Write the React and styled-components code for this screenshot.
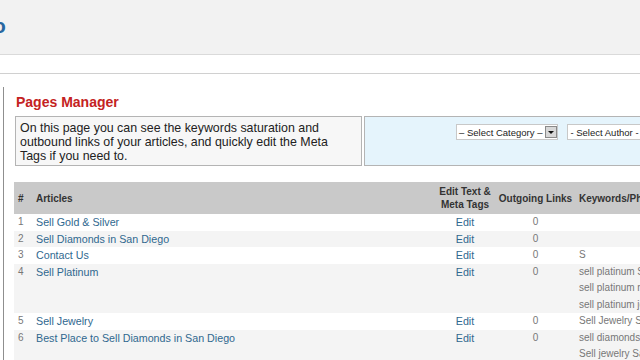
import React from 'react';
import styled, { createGlobalStyle, css } from 'styled-components'

const Global = createGlobalStyle`
  html, body {
    margin: 0;
    padding: 0;
    background: #fff;
    overflow: hidden;
    font-family: "Liberation Sans", Arial, sans-serif;
  }
`

const Page = styled.div`
  width: 640px;
  height: 360px;
  overflow: hidden;
`

const Header = styled.div`
  height: 54px;
  background: #f2f2f2;
  border-bottom: 1px solid #dadada;
  display: flex;
  align-items: flex-start;
`

const Logo = styled.span`
  margin-left: -7px;
  margin-top: 14px;
  font-size: 21px;
  font-weight: bold;
  color: #2867a0;
  line-height: 24px;
`

const SubBar = styled.div`
  height: 18px;
  border-bottom: 1px solid #d0d0d0;
`

const Panel = styled.div`
  margin: 13px 0 0 3px;
  border-left: 1px solid #8f8f8f;
  padding: 7px 0 0 10px;
  height: 300px;
`

const Title = styled.h1`
  margin: 0 0 6px 2px;
  font-size: 14px;
  line-height: 16px;
  font-weight: bold;
  color: #c42222;
`

const InfoRow = styled.div`
  display: flex;
  gap: 2px;
  margin-left: 1px;
  height: 50px;
`

const InfoBox = styled.div`
  width: 320px;
  flex: none;
  border: 1px solid #b4b4b4;
  background: #f7f7f7;
  padding: 4px 21px 0 4px;
  font-size: 12.4px;
  line-height: 14px;
  color: #222;
`

const FilterBox = styled.div`
  flex: 1;
  border: 1px solid #b4b4b4;
  border-right: none;
  background: #e5f4fc;
  display: flex;
  align-items: flex-start;
  gap: 9px;
  padding: 7px 0 0 91px;
  white-space: nowrap;
`

const Select = styled.div`
  display: flex;
  align-items: center;
  height: 14px;
  background: #fff;
  border: 1px solid #c8c8c8;
  font-size: 9.5px;
  color: #222;
  padding-left: 2px;
  flex: none;
`

const Arrow = styled.span`
  width: 12px;
  height: 12px;
  margin-left: 3px;
  background: #d8d8d8;
  border: 1px solid #8a8a8a;
  box-sizing: border-box;
  display: flex;
  align-items: center;
  justify-content: center;
  &::after {
    content: '';
    border-left: 3px solid transparent;
    border-right: 3px solid transparent;
    border-top: 3px solid #111;
  }
`

const Table = styled.table`
  margin-top: 16px;
  border-collapse: collapse;
  table-layout: fixed;
  width: 880px;
`

const Th = styled.th`
  background: #c9c9c9;
  height: 32px;
  padding: 0 2px;
  font-size: 10px;
  line-height: 13px;
  font-weight: bold;
  color: #333;
  text-align: ${p => p.align || 'left'};
  white-space: nowrap;
`

const Tr = styled.tr`
  background: ${p => (p.alt ? '#f4f4f4' : '#fff')};
`

const Td = styled.td`
  padding: 0 2px;
  vertical-align: top;
  line-height: 16.5px;
  font-size: 10px;
  color: #777;
  text-align: ${p => p.align || 'left'};
  white-space: nowrap;
  overflow: hidden;
  ${p => p.link && css`
    font-size: 10.7px;
    color: #30688f;
  `}
`

const Num = styled.span`
  padding-left: 2px;
`

const rows = [
  { title: 'Sell Gold & Silver', kw: [] },
  { title: 'Sell Diamonds in San Diego', kw: [] },
  { title: 'Contact Us', kw: ['S'] },
  { title: 'Sell Platinum', kw: ['sell platinum San Diego', 'sell platinum rings', 'sell platinum jewelry'] },
  { title: 'Sell Jewelry', kw: ['Sell Jewelry San Diego'] },
  { title: 'Best Place to Sell Diamonds in San Diego', kw: ['sell diamonds San Diego', 'Sell jewelry San Diego'] },
]

export default function App() {
  return (
    <Page>
      <Global />
      <Header><Logo>o</Logo></Header>
      <SubBar />
      <Panel>
        <Title>Pages Manager</Title>
        <InfoRow>
          <InfoBox>
            On this page you can see the keywords saturation and outbound links of your articles, and quickly edit the Meta Tags if you need to.
          </InfoBox>
          <FilterBox>
            <Select>– Select Category –<Arrow /></Select>
            <Select>- Select Author -<Arrow /></Select>
          </FilterBox>
        </InfoRow>
        <Table>
          <colgroup>
            <col style={{ width: 20 }} />
            <col style={{ width: 402 }} />
            <col style={{ width: 58 }} />
            <col style={{ width: 83 }} />
            <col style={{ width: 317 }} />
          </colgroup>
          <thead>
            <tr>
              <Th><Num>#</Num></Th>
              <Th>Articles</Th>
              <Th align="center">Edit Text &amp;<br />Meta Tags</Th>
              <Th align="center">Outgoing Links</Th>
              <Th>Keywords/Phrases</Th>
            </tr>
          </thead>
          <tbody>
            {rows.map((r, i) => (
              <Tr key={i} alt={i % 2 === 1}>
                <Td><Num>{i + 1}</Num></Td>
                <Td link>{r.title}</Td>
                <Td link align="center">Edit</Td>
                <Td align="center">0</Td>
                <Td>{r.kw.length ? r.kw.map(k => <div key={k}>{k}</div>) : '\u00a0'}</Td>
              </Tr>
            ))}
          </tbody>
        </Table>
      </Panel>
    </Page>
  )
}
